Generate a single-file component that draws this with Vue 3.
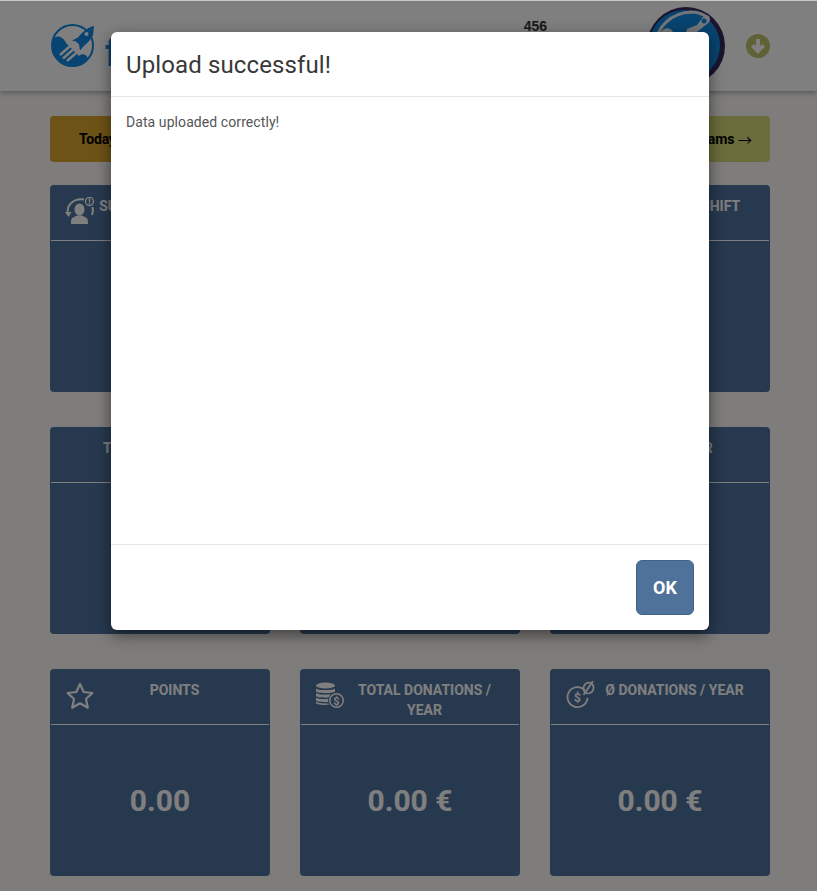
<template>
  <div class="page">
    <header class="top-bar">
      <div class="brand">
        <svg class="logo" viewBox="0 0 46 46">
          <circle cx="22.500" cy="22.500" r="20.500" fill="none" stroke="#1188e2" stroke-width="2" />
          <path d="M2 20c0-6 6-8 10-5 2 1 3 3 4 5l13 13c3-3 8-2 9 3a21 21 0 0 1-36-16z" fill="#1188e2" />
          <path d="M44 3.500l-1 8.500c-2 5-7 9-10 12l-3 3.500-1-6-3-3-4-1 6-3c4-5 10-10.500 16-11.500z" fill="#1188e2" />
          <circle cx="36.500" cy="11" r="2" fill="#fff" />
          <path d="M23 20.500L10 32M26 24L13 35.500M29 27.500L17 38" fill="none" stroke="#fff" stroke-width="2.400" />
        </svg>
        <span class="brand-name">f</span>
      </div>
      <div class="stat-number">456</div>
      <div class="avatar">
        <svg viewBox="0 0 78 78">
          <circle cx="39" cy="39" r="39" fill="#36285f" />
          <circle cx="37.500" cy="38.500" r="35.500" fill="#1188e2" />
          <path d="M9 36C10 20 24 6 44 5c6 0 12 2 16 5" fill="none" stroke="#e8eef2" stroke-width="3" />
          <path d="M13 26c4-6 10-6 13-1l6 4-12 3z" fill="#e8eef2" />
          <path d="M62 9c2 3 1 6-2 8l-10 8-12 5 2-8 10-4 6-8c2-2 4-2 6-1z" fill="#e8eef2" />
          <circle cx="57" cy="14" r="2.500" fill="#1188e2" />
        </svg>
      </div>
      <svg class="down-arrow" viewBox="0 0 24 24">
        <circle cx="12" cy="12" r="12" fill="#bcc56d" />
        <path d="M12 5v12M6.500 11.500L12 17l5.500-5.500" fill="none" stroke="#fff" stroke-width="4" />
      </svg>
    </header>

    <main class="content">
      <div class="banners">
        <div class="banner banner-today">Today's shift</div>
        <div class="banner banner-teams">All teams <span class="arrow">→</span></div>
      </div>

      <div class="cards">
        <section v-for="card in cards" :key="card.title" class="card">
          <div class="card-head">
            <span v-if="card.icon" class="card-icon">
              <svg v-if="card.icon === 'support'" viewBox="0 0 30 30" fill="none" stroke="#fff">
                <path d="M3 17C1 8 9 1 19 2.500" stroke-width="2" />
                <path d="M27.500 10c1 3 .5 5-.5 8" stroke-width="2" />
                <path d="M0 15h6.500l-3 5z" fill="#fff" stroke="none" />
                <ellipse cx="14.500" cy="12.500" rx="5" ry="6" fill="#fff" stroke="none" />
                <path d="M6 27c0-3 0-6 3-7l3-1.500h5l3 1.500c3 1 3 4 3 7z" fill="#fff" stroke="none" />
                <circle cx="24.500" cy="4.500" r="4" fill="#4f739e" stroke-width="1.400" />
                <path d="M24.500 2v3.500M24.500 6v1.200" stroke-width="1.400" />
              </svg>
              <svg v-else-if="card.icon === 'star'" viewBox="0 0 30 30" fill="none" stroke="#fff" stroke-width="2.200">
                <path d="M15 3l3.700 8 8.800 1-6.500 6 1.800 8.800L15 22.300 7.200 26.800 9 18l-6.500-6 8.800-1z" stroke-linejoin="round" />
              </svg>
              <svg v-else-if="card.icon === 'coins'" viewBox="0 0 30 30">
                <g fill="#fff">
                  <ellipse cx="10.500" cy="4.500" rx="9.500" ry="3" />
                  <path d="M1 7.500c2 2.200 17 2.200 19 0v3c-2 2.200-17 2.200-19 0zM1 12c2 2.200 17 2.200 19 0v3c-2 2.200-17 2.200-19 0zM1 16.500c2 2.200 17 2.200 19 0v3c-2 2.200-17 2.200-19 0zM1 20.500c2 2.200 13 2.200 15 1.500v1c-4 1.500-13 1-15-.5z" />
                </g>
                <circle cx="21.500" cy="19.500" r="8.500" fill="#4f739e" />
                <circle cx="21.500" cy="19.500" r="6.800" fill="none" stroke="#fff" stroke-width="1.500" />
                <text x="21.500" y="23.500" class="icon-dollar" font-size="11">$</text>
              </svg>
              <svg v-else viewBox="0 0 30 30" fill="none" stroke="#fff" stroke-width="1.800">
                <path d="M20 9.500A10 10 0 1 0 22.500 17" />
                <text x="12.500" y="21" class="icon-dollar" font-size="12" stroke="none">$</text>
                <ellipse cx="23.500" cy="7" rx="5" ry="5.500" transform="rotate(25 23.500 7)" />
                <path d="M18.500 14L28 0" />
              </svg>
            </span>
            <h3 class="card-title">{{ card.title }}</h3>
          </div>
          <div class="card-value">{{ card.value }}</div>
        </section>
      </div>
    </main>

    <div class="backdrop">
      <div class="modal">
        <div class="modal-head">
          <h2>Upload successful!</h2>
        </div>
        <div class="modal-body">Data uploaded correctly!</div>
        <div class="modal-foot">
          <button class="ok-btn" type="button">OK</button>
        </div>
      </div>
    </div>
  </div>
</template>

<script setup>
const cards = [
  { title: "SUPPORTERS / MONTH", value: "0", icon: "support" },
  { title: "CONTACTS", value: "0", icon: "" },
  { title: "Ø HOURS PER SHIFT", value: "0.00", icon: "coins" },
  { title: "TOTAL MEMBERS", value: "0.00", icon: "" },
  { title: "TOTAL / WEEK", value: "0.00", icon: "" },
  { title: "Ø HOURS / YEAR", value: "0.00", icon: "" },
  { title: "POINTS", value: "0.00", icon: "star" },
  { title: "TOTAL DONATIONS / YEAR", value: "0.00 €", icon: "coins" },
  { title: "Ø DONATIONS / YEAR", value: "0.00 €", icon: "average" },
];
</script>

<style>
html,
body {
  margin: 0;
  overflow: hidden;
  background: #fdfbf7;
}
</style>

<style scoped>
.page {
  position: relative;
  height: 891px;
  overflow: hidden;
  font-family: Roboto, "Liberation Sans", sans-serif;
  background: #fdfbf7;
}

.top-bar {
  display: flex;
  align-items: center;
  height: 90px;
  padding: 0 47px 0 50px;
  border-top: 1px solid #c8c8c8;
  background: #fff;
  box-shadow: 0 1px 6px rgba(0, 0, 0, 0.4);
}

.brand {
  display: flex;
  align-items: center;
  gap: 9px;
}

.logo {
  width: 46px;
  height: 46px;
}

.brand-name {
  margin-top: 14px;
  font-size: 38px;
  font-weight: 700;
  color: #1188e2;
}

.stat-number {
  align-self: flex-start;
  margin: 17px 100px 0 auto;
  font-family: "Liberation Sans", sans-serif;
  font-size: 14px;
  font-weight: 700;
  line-height: 16px;
  color: #333;
}

.avatar {
  width: 78px;
  height: 78px;
  margin-right: 21px;
}

.avatar svg,
.card-icon svg {
  display: block;
  width: 100%;
  height: 100%;
}

.down-arrow {
  width: 24px;
  height: 24px;
}

.content {
  padding: 25px 47px 15px 50px;
}

.banners {
  display: grid;
  grid-template-columns: 1fr 1fr;
  gap: 30px;
  margin-bottom: 23px;
}

.banner {
  display: flex;
  align-items: center;
  height: 46px;
  border-radius: 4px;
  font-size: 14px;
  font-weight: 700;
  color: #000;
  white-space: pre;
}

.banner-today {
  padding-left: 29px;
  letter-spacing: -0.2px;
  background: #dca62c;
}

.banner-teams {
  justify-content: flex-end;
  padding-right: 18px;
  background: #d6d878;
}

.arrow {
  font-family: "Noto Sans CJK SC", sans-serif;
  font-weight: 400;
}

.cards {
  display: grid;
  grid-template-columns: repeat(3, 220px);
  gap: 35px 30px;
}

.card {
  height: 207px;
  border-radius: 4px;
  background: #4f739e;
  color: #fff;
}

.card-head {
  display: flex;
  box-sizing: border-box;
  height: 56px;
  margin: 0 1px;
  padding: 11px 15px 0 14px;
  border-bottom: 1px solid #fff;
}

.card-icon {
  flex: none;
  width: 30px;
  height: 30px;
  margin-top: 1px;
}

.card-title {
  flex: 1;
  margin: 0;
  font-size: 14px;
  font-weight: 700;
  line-height: 20px;
  text-align: center;
}

.card-value {
  display: flex;
  align-items: center;
  justify-content: center;
  height: 150px;
  font-size: 30px;
  font-weight: 700;
}

.icon-dollar {
  font-family: Roboto, sans-serif;
  font-weight: 700;
  text-anchor: middle;
  fill: #fff;
}

.backdrop {
  position: absolute;
  top: 1px;
  right: 0;
  bottom: 0;
  left: 0;
  display: flex;
  justify-content: center;
  padding: 31px 0 0 3px;
  background: rgba(0, 0, 0, 0.5);
}

.modal {
  display: flex;
  flex-direction: column;
  width: 598px;
  height: 598px;
  border-radius: 6px;
  background: #fff;
  box-shadow: 0 5px 15px rgba(0, 0, 0, 0.5);
}

.modal-head {
  padding: 16px 15px 14px;
  border-bottom: 1px solid #e5e5e5;
}

.modal-head h2 {
  margin: 0;
  font-size: 24px;
  font-weight: 400;
  line-height: 34px;
  letter-spacing: 0.12px;
  color: #383838;
}

.modal-body {
  flex: 1;
  padding: 15px;
  font-size: 14px;
  line-height: 20px;
  letter-spacing: 0.08px;
  color: #555;
}

.modal-foot {
  display: flex;
  justify-content: flex-end;
  padding: 15px;
  border-top: 1px solid #e5e5e5;
}

.ok-btn {
  width: 58px;
  height: 55px;
  padding: 0;
  border: 1px solid #3e6288;
  border-radius: 6px;
  background: #4e7299;
  font-family: Roboto, sans-serif;
  font-size: 18px;
  font-weight: 700;
  color: #fff;
}
</style>
